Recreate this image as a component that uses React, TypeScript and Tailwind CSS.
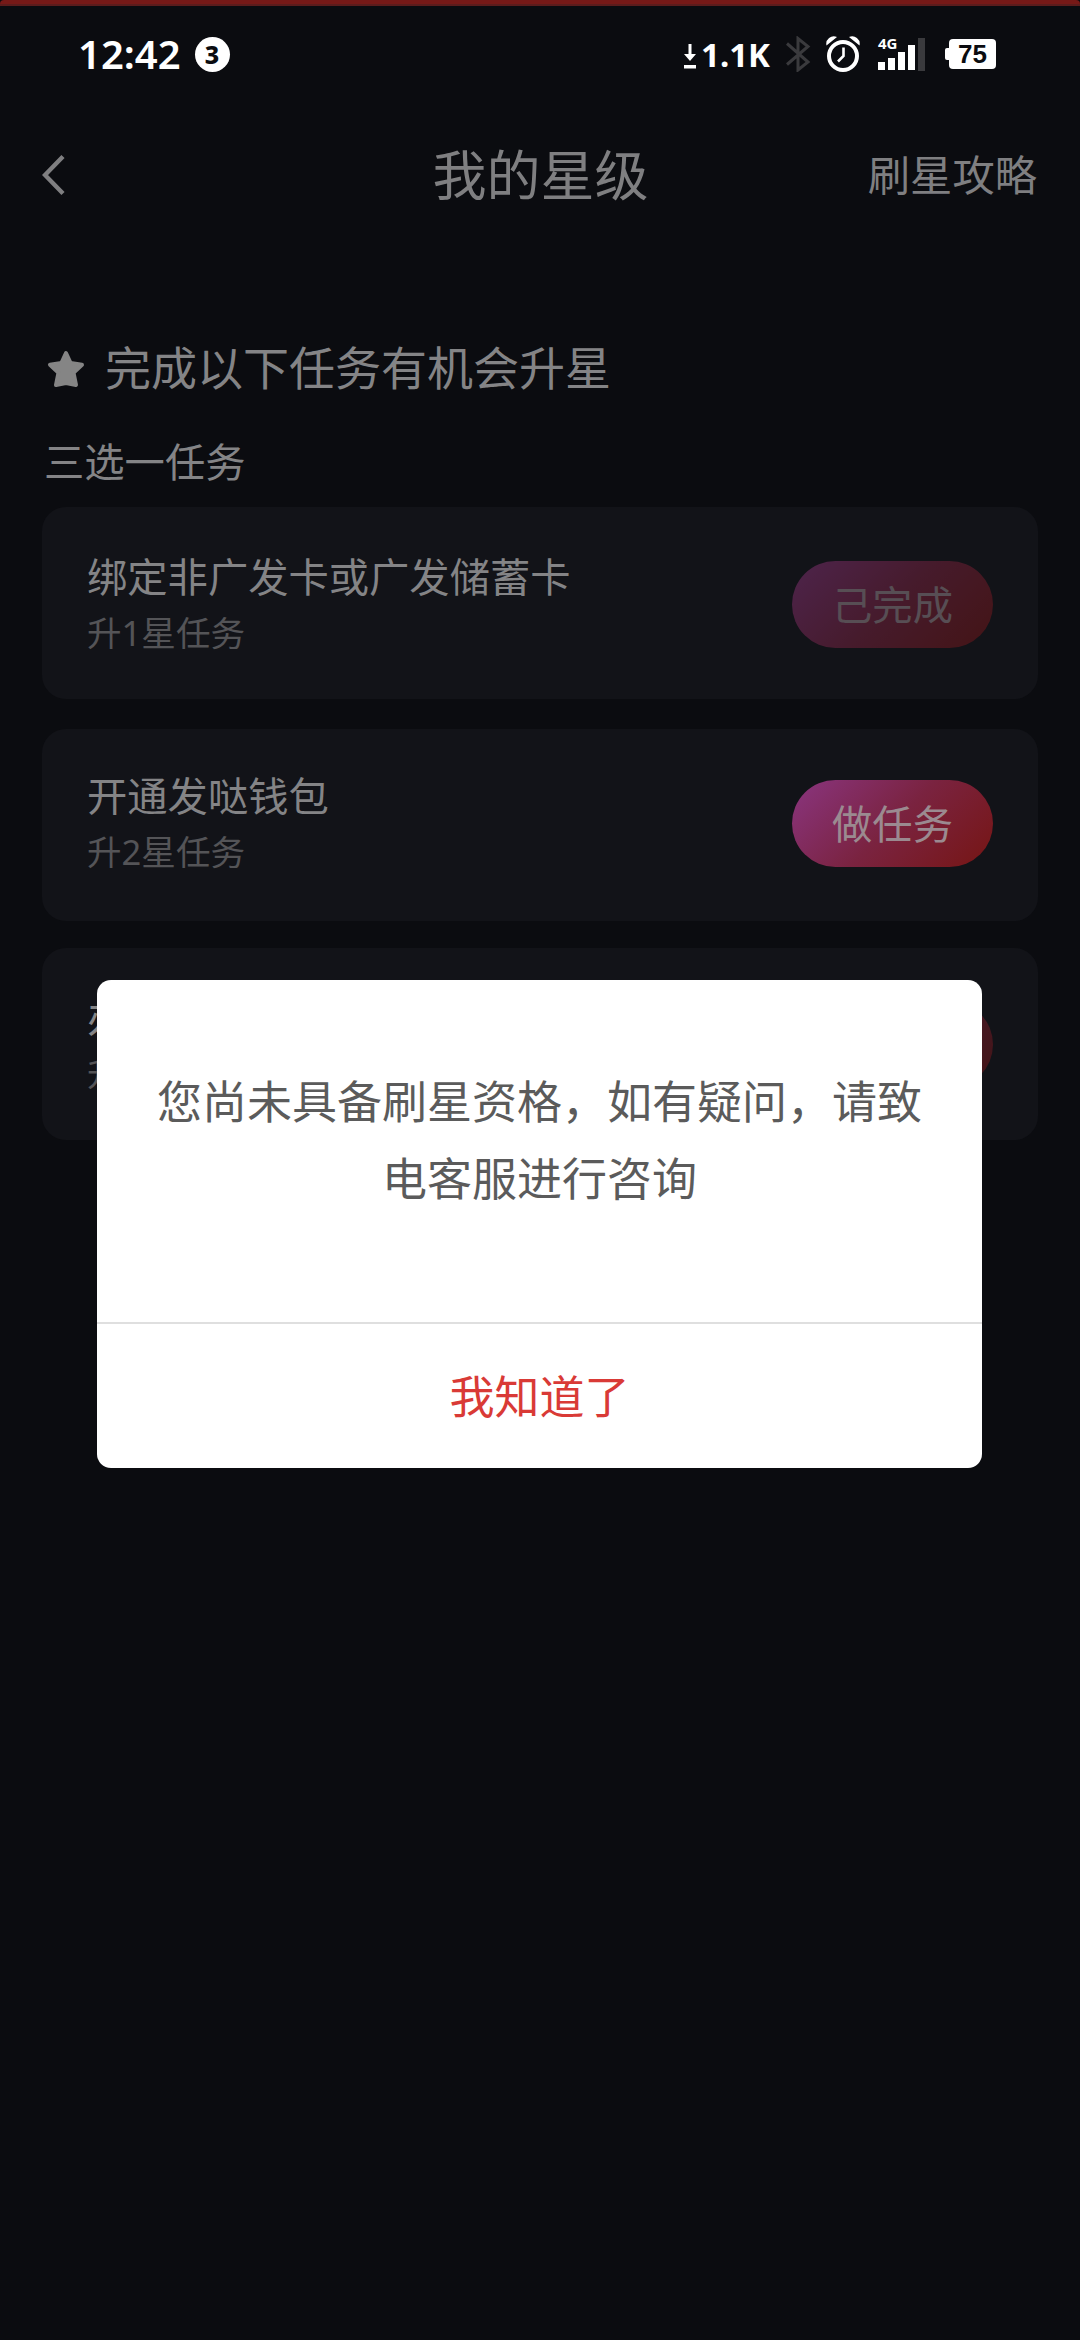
import clsx from "clsx";

const tasks = [
    { title: "绑定非广发卡或广发储蓄卡", desc: "升1星任务", action: "己完成", done: true, card: "mt-0", pad: "pt-[47px]", btn: "mt-[7px]" },
    { title: "开通发哒钱包", desc: "升2星任务", action: "做任务", done: false, card: "mt-[30px]", pad: "pt-[44px]", btn: "mt-[7px]" },
    { title: "办卡", desc: "升3", action: "己完成", done: true, card: "mt-[27px]", pad: "pt-[46px]", btn: "mt-[7px]" },
];

const StatusBar = () => {
    return (
        <div className="flex h-[91px] items-start justify-between pl-[78px] pr-[84px] pt-[18px] text-white">
            <div className="flex h-[60px] items-center">
                <span className="text-[40px] font-semibold leading-[60px]">12:42</span>
                <span className="ml-[14px] flex h-[35px] w-[35px] items-center justify-center rounded-full bg-white text-[25px] font-extrabold leading-[35px] text-[#0b0c10]">3</span>
            </div>
            <div className="flex h-[60px] items-center">
                <svg className="mt-[4px] h-[26px] w-[12px]" viewBox="0 0 12 26" fill="white">
                    <path d="M4.500 1h3v10H12l-6 7-6-7h4.500zM0 22h12v3.600H0z" />
                </svg>
                <span className="ml-[5px] mt-[2px] w-[84px] text-[33px] font-bold leading-[60px]">1.1K</span>
                <svg className="mb-[1px] h-[36px] w-[26px]" viewBox="0 0 26 36" fill="none" stroke="#3a3a3d" strokeWidth="3">
                    <path d="M2 7.500l21 18.500-10 8V2.500l10 8L2 28.500" />
                </svg>
                <svg className="ml-[15px] h-[36px] w-[34px]" viewBox="0 0 34 36" fill="none" stroke="white">
                    <circle cx="17" cy="20" r="14" strokeWidth="4" />
                    <path d="M17.500 11.500v8.500l-5.500 5.500" strokeWidth="2.600" />
                    <path d="M.5 9.500a7.500 7.500 0 0 1 10.500-8.500zM33.500 9.500a7.500 7.500 0 0 0-10.500-8.500z" fill="white" stroke="none" />
                </svg>
                <div className="relative ml-[18px] flex h-[33px] items-end gap-[3px]">
                    <span className="absolute left-0 top-[-2px] text-[15px] font-bold leading-[15px]">4G</span>
                    <i className="mb-[1px] h-[8px] w-[7px] bg-white" />
                    <i className="mb-[1px] h-[12px] w-[7px] bg-white" />
                    <i className="mb-[1px] h-[18px] w-[7px] bg-white" />
                    <i className="mb-[1px] h-[25px] w-[7px] bg-white" />
                    <i className="h-[33px] w-[7px] bg-[#3a3a3d]" />
                </div>
                <div className="ml-[20px] flex items-center">
                    <i className="h-[12px] w-[4px] rounded-l-[2px] bg-white" />
                    <span className="h-[30px] w-[47px] rounded-[4px] bg-white text-center font-['Liberation_Sans'] text-[26px] font-bold leading-[31px] text-[#0b0c10]">75</span>
                </div>
            </div>
        </div>
    );
};

const NavBar = () => {
    return (
        <div className="grid h-[156px] grid-cols-[1fr_auto_1fr] items-center pl-[42px] pr-[43px] text-[#7f7f81]">
            <svg className="h-[42px] w-[24px]" viewBox="0 0 24 42" fill="none" stroke="currentColor" strokeWidth="4.400">
                <path d="M21 2.500L3 21l18 18.500" />
            </svg>
            <h1 className="pl-[2px] text-[54px] leading-[60px]">我的星级</h1>
            <span className="justify-self-end text-[42.3px] leading-[60px]">刷星攻略</span>
        </div>
    );
};

const TaskCard = ({ task }: { task: (typeof tasks)[number] }) => {
    return (
        <div className={clsx("flex h-[192px] items-start justify-between rounded-[24px] bg-[#121318] pl-[45px] pr-[45px]", task.card, task.pad)}>
            <div>
                <p className="text-[40.3px] leading-[46px] text-[#848486]">{task.title}</p>
                <p className="mt-[10px] text-[34.6px] leading-[46px] text-[#545457]">{task.desc}</p>
            </div>
            <button
                className={clsx(
                    "h-[87px] w-[201px] rounded-full bg-linear-[135deg] from-[#8a3580] via-[#7a2340] to-[#761513] text-[40.3px] leading-[85px] text-[#9b8a90]",
                    task.btn,
                    task.done && "opacity-50"
                )}
            >
                {task.action}
            </button>
        </div>
    );
};

const Dialog = () => {
    return (
        <div className="absolute left-[97px] top-[980px] flex h-[488px] w-[885px] flex-col rounded-[14px] bg-white text-center text-[45px]">
            <p className="h-[342px] px-[59px] pt-[83px] leading-[77px] text-[#5b5b5b]">您尚未具备刷星资格，如有疑问，请致电客服进行咨询</p>
            <button className="flex-1 border-t-2 border-[#dfdfdf] pt-[2px] text-[#d93a36]">我知道了</button>
        </div>
    );
};

const App = () => {
    return (
        <div className="relative h-[2340px] w-[1080px] overflow-hidden bg-[#0b0c10] font-['Noto_Sans','Noto_Sans_CJK_SC',sans-serif]">
            <div className="h-[6px] rounded-t-[4px] border-b-2 border-[#5c1c1c] bg-[#761917]" />
            <StatusBar />
            <NavBar />
            <main className="px-[42px]">
                <div className="mt-[84px] flex h-[60px] items-center text-[#848486]">
                    <svg className="ml-[5px] mt-[3px] h-[38px] w-[38px]" viewBox="0 0 38 38" fill="#858585" stroke="#858585" strokeWidth="4" strokeLinejoin="round">
                        <path d="M19 3l4.600 10 11.400 1.700-8.500 8 2.500 12.300-10-2-10 2 2.500-12.300-8.500-8 11.400-1.700z" />
                    </svg>
                    <h2 className="ml-[20px] text-[46px] leading-[60px]">完成以下任务有机会升星</h2>
                </div>
                <p className="mb-[15px] mt-[35px] h-[60px] pl-[2px] text-[40.3px] leading-[60px] text-[#848486]">三选一任务</p>
                {tasks.map((task, i) => (
                    <TaskCard key={i} task={task} />
                ))}
            </main>
            <Dialog />
        </div>
    );
};

export default App;
